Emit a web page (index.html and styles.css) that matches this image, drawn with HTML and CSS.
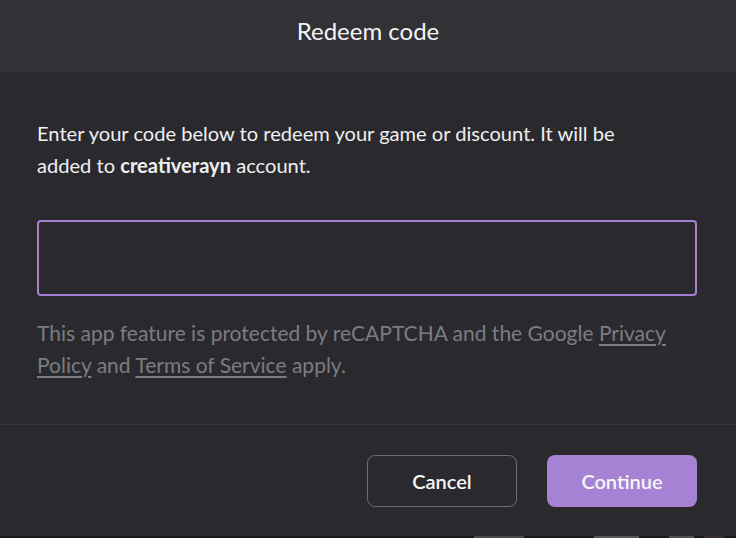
FILE: index.html
```html
<!DOCTYPE html>
<html>
<head>
<meta charset="utf-8">
<link rel="stylesheet" href="styles.css">
</head>
<body>
<div class="dialog">
  <div class="header">Redeem code</div>
  <div class="content">
    <p class="intro">Enter your code below to redeem your game or discount. It will be added to <b>creativerayn</b> account.</p>
    <div class="input"></div>
    <p class="legal">This app feature is protected by reCAPTCHA and the Google <a href="#">Privacy Policy</a> and <a href="#">Terms of Service</a> apply.</p>
  </div>
  <div class="footer">
    <button class="btn cancel">Cancel</button>
    <button class="btn primary">Continue</button>
  </div>
</div>
<div class="strip"><span class="s1"></span><span class="s2"></span><span class="s3"></span><span class="s4"></span></div>
</body>
</html>
```
FILE: styles.css
```css
html, body {
  margin: 0;
  padding: 0;
  background: #2a2a2e;
  font-family: Lato, "Open Sans", sans-serif;
}
.dialog {
  width: 736px;
  height: 536px;
  background: #2a2a2e;
  display: flex;
  flex-direction: column;
}
.header {
  height: 72px;
  background: #313136;
  color: #f4f4f4;
  font-size: 24px;
  display: flex;
  align-items: center;
  justify-content: center;
  padding-bottom: 11px;
  box-sizing: border-box;
}
.content {
  padding: 45px 39px 43px 37px;
  border-bottom: 1px solid #36363b;
}
.intro {
  margin: 0;
  max-width: 625px;
  color: #efefef;
  font-size: 20.1px;
  line-height: 32px;
}
.intro b { font-weight: 700; }
.input {
  margin-top: 39px;
  height: 76px;
  border: 2px solid #a47fd2;
  border-radius: 4px;
  box-sizing: border-box;
  background: #2a2a2e;
}
.legal {
  margin: 21px 0 0;
  max-width: 640px;
  color: #7c7c82;
  font-size: 21px;
  line-height: 32px;
}
.legal a {
  color: #7c7c82;
  text-decoration: underline;
  text-underline-offset: 3px;
}
.footer {
  flex: 1;
  display: flex;
  justify-content: flex-end;
  align-items: flex-start;
  gap: 30px;
  padding: 30px 39px 0 0;
}
.btn {
  width: 150px;
  height: 52px;
  border-radius: 8px;
  font-family: Lato, "Open Sans", sans-serif;
  font-size: 20px;
  font-weight: 600;
  color: #f6f6f6;
  box-sizing: border-box;
  cursor: pointer;
}
.cancel {
  background: #2a2a2e;
  border: 1px solid #6c6c70;
}
.primary {
  background: #a582d3;
  border: none;
}
.strip {
  height: 2px;
  background: #1a1a1c;
  display: flex;
}
.strip span { display: block; height: 2px; }
.s1 { margin-left: 474px; width: 50px; background: #4a4a50; }
.s2 { margin-left: 70px; width: 45px; background: #55555a; }
.s3 { margin-left: 30px; width: 25px; background: #505055; }
.s4 { margin-left: 10px; width: 20px; background: #3a3030; }
```
